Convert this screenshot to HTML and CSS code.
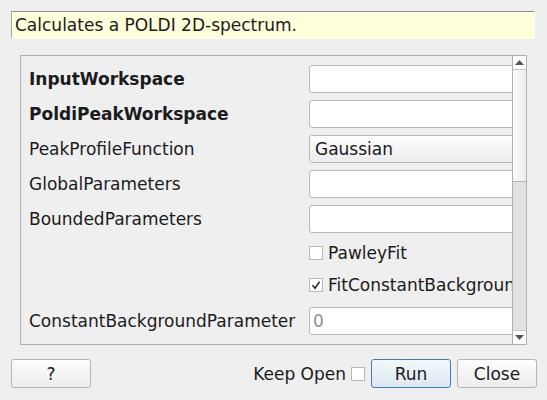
FILE: index.html
```html
<!DOCTYPE html>
<html>
<head>
<meta charset="utf-8">
<link rel="stylesheet" href="styles.css">
</head>
<body>
<div class="desc">Calculates a POLDI 2D-spectrum.</div>
<div class="frame">
  <div class="viewport">
    <div class="props">
      <div class="row"><span class="label bold">InputWorkspace</span><span class="field"></span></div>
      <div class="row"><span class="label bold">PoldiPeakWorkspace</span><span class="field"></span></div>
      <div class="row"><span class="label">PeakProfileFunction</span><span class="field combo">Gaussian</span></div>
      <div class="row"><span class="label">GlobalParameters</span><span class="field"></span></div>
      <div class="row"><span class="label">BoundedParameters</span><span class="field"></span></div>
      <div class="row check-row first"><span class="label"></span><span class="check"><span class="box"></span>PawleyFit</span></div>
      <div class="row check-row second"><span class="label"></span><span class="check"><span class="box checked"><svg width="12" height="12" viewBox="0 0 12 12"><path d="M2.5 6.2 L5 9.2 L9.5 2.8" fill="none" stroke="#222" stroke-width="1.5"/></svg></span>FitConstantBackground</span></div>
      <div class="row"><span class="label">ConstantBackgroundParameter</span><span class="field value">0</span></div>
    </div>
  </div>
  <div class="scrollbar">
    <div class="sb-btn up"><svg width="9" height="5" viewBox="0 0 9 5"><path d="M0 5 L4.5 0 L9 5 Z" fill="#555"/></svg></div>
    <div class="sb-handle"></div>
    <div class="sb-trough"></div>
    <div class="sb-btn down"><svg width="9" height="5" viewBox="0 0 9 5"><path d="M0 0 L9 0 L4.5 5 Z" fill="#555"/></svg></div>
  </div>
</div>
<div class="footer">
  <button class="btn">?</button>
  <div class="spacer"></div>
  <span class="keep">Keep Open</span>
  <span class="box keep-box"></span>
  <button class="btn default">Run</button>
  <button class="btn">Close</button>
</div>
</body>
</html>
```

FILE: styles.css
```css
html, body {
  margin: 0;
  padding: 0;
  background: #efefef;
  font-family: "DejaVu Sans", "Liberation Sans", sans-serif;
  font-size: 17px;
  color: #1b1b1b;
}

.desc {
  box-sizing: border-box;
  margin: 11px 12px 0 11px;
  height: 28px;
  padding: 0 0 0 3px;
  display: flex;
  align-items: center;
  background: #ffffdc;
  border-top: 1px solid #8c8c8c;
  border-left: 1px solid #a8a8a8;
  border-right: 1px solid #ffffff;
  border-bottom: 1px solid #ffffff;
}

.frame {
  box-sizing: border-box;
  margin: 16px 20px 0 20px;
  height: 290px;
  border: 1px solid #b0b0b0;
  display: flex;
}

.viewport {
  flex: 1;
  overflow: hidden;
}

.props {
  padding: 9px 0 0 8px;
  display: flex;
  flex-direction: column;
  gap: 7px;
}

.row {
  display: flex;
  align-items: center;
  height: 28px;
}

.label {
  width: 280px;
  flex: none;
  white-space: nowrap;
}

.bold {
  font-weight: bold;
}

.field {
  box-sizing: border-box;
  flex: none;
  width: 230px;
  height: 28px;
  background: #ffffff;
  border: 1px solid #b8b8b8;
  border-radius: 3px;
  display: flex;
  align-items: center;
  padding-left: 5px;
}

.combo {
  background: linear-gradient(#fdfdfd, #ececec);
}

.value {
  color: #8e8e8e;
  padding-left: 3px;
}

.check-row.first {
  height: 26px;
}

.check-row.second {
  align-items: flex-start;
  padding-top: 2px;
  height: 25px;
}

.check {
  display: flex;
  align-items: center;
  white-space: nowrap;
}

.box {
  box-sizing: border-box;
  width: 14px;
  height: 14px;
  background: #ffffff;
  border: 1px solid #b8b8b8;
  margin-right: 5px;
  display: inline-flex;
  align-items: center;
  justify-content: center;
  flex: none;
}

.scrollbar {
  box-sizing: border-box;
  width: 14px;
  border-left: 1px solid #b0b0b0;
  display: flex;
  flex-direction: column;
}

.sb-btn {
  box-sizing: border-box;
  height: 14px;
  display: flex;
  align-items: center;
  justify-content: center;
  background: #ffffff;
}

.sb-btn.up {
  border-bottom: 1px solid #c4c4c4;
}

.sb-btn.down {
  border-top: 1px solid #c4c4c4;
}

.sb-handle {
  box-sizing: border-box;
  height: 112px;
  background: linear-gradient(90deg, #fbfbfb, #ececec);
  border-bottom: 1px solid #b4b4b4;
}

.sb-trough {
  flex: 1;
  background: #e2e2e2;
}

.footer {
  display: flex;
  align-items: center;
  margin-top: 14px;
  padding: 0 10px 0 11px;
}

.spacer {
  flex: 1;
}

.btn {
  box-sizing: border-box;
  width: 80px;
  height: 29px;
  font-family: inherit;
  font-size: 17px;
  color: #1b1b1b;
  background: linear-gradient(#fdfdfd, #ededed);
  border: 1px solid #b4b4b4;
  border-radius: 3px;
  padding: 0;
  margin-left: 6px;
}

.btn:first-child {
  margin-left: 0;
}

.btn.default {
  border-color: #3b7fc4;
  background: linear-gradient(#f4f8fc, #dde7f1);
}

.keep {
  margin-right: 5px;
}

.keep-box {
  margin-right: 0;
}
```
